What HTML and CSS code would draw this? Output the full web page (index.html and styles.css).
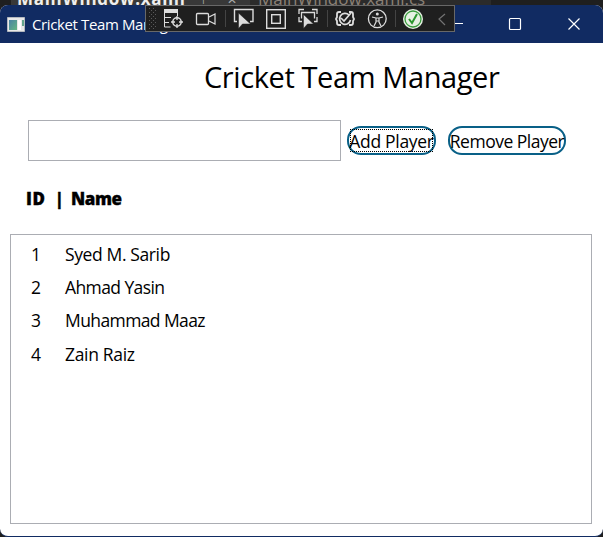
FILE: index.html
```html
<!DOCTYPE html>
<html lang="en">
<head>
<meta charset="utf-8">
<title>Cricket Team Manager</title>
<link rel="stylesheet" href="styles.css">
</head>
<body>
<div class="editor-tabs"><span class="tab active">MainWindow.xaml</span><span class="tab-tools"><i>⊢</i><i>✕</i></span><span class="tab second">MainWindow.xaml.cs</span></div>
<main class="window">
  <header class="titlebar">
    <svg class="app-icon" width="18" height="15" viewBox="0 0 18 15"><defs><linearGradient id="g" x2="1" y2="1"><stop stop-color="#4a82a5"/><stop offset="1" stop-color="#65b783"/></linearGradient></defs><path fill="#e9e9e9" stroke="#b5b9bf" d="M.5.5h17v14H.5z"/><path fill="url(#g)" d="M2 3h8v10H2z"/><path fill="#fff" d="M11 3h3v10h-3z"/><path fill="#64a58c" d="M15 3h2v6h-2z"/></svg>
    <span class="caption">Cricket Team Manager</span>
    <svg class="controls" width="150" height="38" viewBox="0 0 150 38" fill="none" stroke="#fff"><path d="M0 18.500h12" stroke-width="1.200"/><rect x="58.500" y="13.500" width="11" height="11" rx="1" stroke-width="1.200"/><path d="m117.500 13.500 11 11m0-11-11 11" stroke-width="1.200"/></svg>
  </header>
  <section class="client">
    <h1>Cricket Team Manager</h1>
    <div class="entry">
      <input class="name-input" type="text" aria-label="Player name">
      <button class="add"><span>Add Player</span></button>
      <button class="remove"><span>Remove Player</span></button>
    </div>
    <div class="columns"><span>ID</span><span>|</span><span>Name</span></div>
    <ul class="players">
      <li><span class="id">1</span><span class="p1">Syed M. Sarib</span></li>
      <li><span class="id">2</span><span class="p2">Ahmad Yasin</span></li>
      <li><span class="id">3</span><span class="p3">Muhammad Maaz</span></li>
      <li><span class="id">4</span><span class="p4">Zain Raiz</span></li>
    </ul>
  </section>
</main>
<svg class="debug-bar" width="310" height="27" viewBox="145 5 310 27" fill="none" stroke="#dcdcdc">
  <defs><pattern id="dots" x="149" y="8" width="4" height="4" patternUnits="userSpaceOnUse"><path fill="#5a5a5a" stroke="none" d="M0 0h1v1H0zM2 2h1v1H2z"/></pattern></defs>
  <rect x="145.500" y="5.500" width="309" height="26" fill="#1f1f1f" stroke="#686868"/>
  <rect x="149" y="8" width="7" height="21" fill="url(#dots)" stroke="none"/>
  <path d="M164 9h14v4h-14z" fill="#dcdcdc" stroke="none"/><path d="M164.500 13v14h6M164 17.500h7M164 22.500h5M177.500 13v3"/><circle cx="177" cy="22" r="4.200" stroke-width="1.500"/><path d="M177 16v4m0 4v4m-6-6h4m4 0h4" stroke-width="1.300"/>
  <rect x="196.500" y="13.500" width="12" height="11" rx="1" stroke-width="1.300"/><path d="m209 17 6-3v10l-6-3" stroke-width="1.200"/>
  <path d="M225.500 10v17M327.500 10v17M395.500 10v17" stroke="#444"/>
  <path d="M237 21.500h-2.500v-12h18.500v12H250" stroke-width="1.400"/><path d="M238.500 13v15.500l4-4.500h8z" fill="#dcdcdc" stroke="#1f1f1f" stroke-width=".5"/>
  <rect x="266.700" y="9.700" width="18.600" height="18.600" stroke-width="1.400"/><rect x="271.700" y="14.700" width="8.600" height="8.600" stroke-width="1.400"/>
  <path d="M299 14V9.500h5M312 9.500h5V14M299 17v4.500h3M317 17v4.500h-3M301.500 18.500v-6h13v6" stroke-width="1.300"/><path d="M303.500 14.500v14l4-4.500h6z" fill="#dcdcdc" stroke="#1f1f1f" stroke-width=".5"/>
  <path d="M341 12h-2q-2 0-2 2v3l-1 2 1 2v2q0 2 2 2h2M349 12h2q2 0 2 2v3l1 2-1 2v2q0 2-2 2h-2" stroke-width="1.800"/><path d="M349 15a5.500 5.500 0 1 0 1.500 5M341 18l3 3 7-8" stroke-width="1.700"/>
  <circle cx="377.300" cy="18.800" r="8.900" stroke-width="1.300"/><circle cx="377.300" cy="14" r="1.500" fill="#dcdcdc" stroke="none"/><path d="m372 17 4 1h3l4-1M376 18v4l-2 4m5-8v4l2 4M376 21h3" stroke-width="1.200"/>
  <circle cx="413" cy="19" r="10" fill="#e6f1e3" stroke="none"/><circle cx="413" cy="19" r="8" stroke="#399b3d" stroke-width="1.300"/><path d="m409 19 3 4 5-9" stroke="#2b962e" stroke-width="2"/>
  <path d="m445 14-6 5 6 6" stroke="#737373" stroke-width="1.200"/>
</svg>
</body>
</html>
```

FILE: styles.css
```css
* { box-sizing: border-box; }
body { position: relative; margin: 0; width: 603px; height: 537px; overflow: hidden; display: flex; flex-direction: column; background: #1f1f1f; color: #000; font-family: "Open Sans", "Noto Sans", sans-serif; }
.editor-tabs { height: 5px; flex: none; display: flex; overflow: hidden; padding-left: 11px; background: linear-gradient(90deg, #1f1f1f 11px, #383838 11px 250px, #2b2b2b 250px 491px, #1f1f1f 491px); }
.tab { flex: none; white-space: nowrap; font-size: 17px; line-height: 20px; margin-top: -11px; }
.active { width: 187px; padding-left: 6px; color: #eee; font-weight: 700; letter-spacing: .7px; }
.tab-tools { display: flex; gap: 15px; width: 60px; margin-top: -8px; color: #aaa; font-size: 12px; line-height: 16px; padding-left: 4px; }
.tab-tools i { font-style: normal; }
.second { color: #8b8176; }
.window { height: 532px; flex: none; border-bottom: 1px solid #112b62; border-radius: 8px; overflow: hidden; background: #fff; }
.titlebar { height: 38px; display: flex; align-items: center; background: #112b62; color: #fff; padding-left: 7px; }
.caption { margin-left: 7px; width: 418px; font-size: 15px; letter-spacing: -.38px; white-space: nowrap; }
.controls { flex: none; margin-left: 1px; }
.debug-bar { position: absolute; left: 145px; top: 5px; }
.client { display: flex; flex-direction: column; padding: 13px 11px 12px 10px; height: 493px; }
h1 { margin: 0; padding-left: 194px; font-size: 29px; line-height: 42px; font-weight: 400; letter-spacing: -.4px; white-space: nowrap; }
.entry { display: flex; align-items: center; margin: 22px 0 0 18px; }
.name-input { width: 313px; height: 41px; border: 1px solid #abadb3; padding: 4px; background: #fff; font: inherit; }
button { position: relative; flex: none; display: flex; align-items: center; justify-content: center; height: 29px; border: 2px solid #096087; border-radius: 14px; background: #fff; color: #000; padding: 2px 0 0; font-family: inherit; font-size: 17.5px; line-height: 25px; letter-spacing: -.5px; white-space: nowrap; }
.add { width: 89px; margin-left: 6px; letter-spacing: -.3px; }
.add::after { content: ""; position: absolute; inset: 1px; border: 1px dotted #000; }
.remove { width: 118px; margin-left: 12px; }
.columns { display: flex; height: 73px; align-items: center; margin-left: 16px; font-size: 17px; font-weight: 800; padding-top: 1px; -webkit-text-stroke: .35px #000; }
.columns span:first-child { width: 29px; letter-spacing: .7px; }
.columns span:nth-child(2) { width: 16px; }
.columns span:last-child { letter-spacing: -.4px; }
.players { list-style: none; margin: 0; padding: 2px 0 0 20px; height: 290px; border: 1px solid #abadb3; font-size: 17.5px; }
.players li { display: flex; height: 33.300px; align-items: center; white-space: nowrap; }
.id { width: 34px; }
.p1 { letter-spacing: -.38px; }
.p2 { letter-spacing: -.6px; }
.p3 { letter-spacing: -.6px; }
.p4 { letter-spacing: -.33px; }
```
